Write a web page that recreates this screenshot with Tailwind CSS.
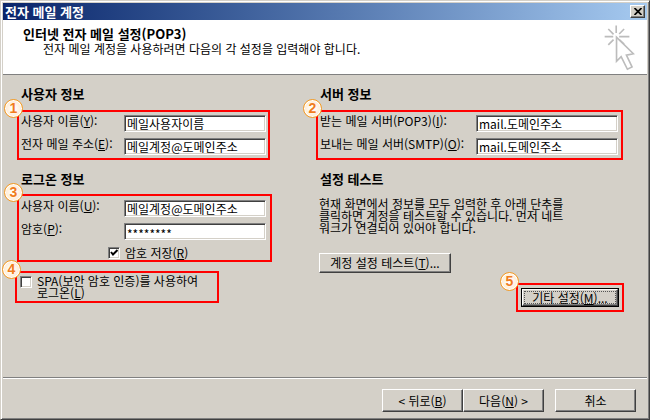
<!DOCTYPE html>
<html lang="ko">
<head>
  <meta charset="UTF-8" />
  <meta name="viewport" content="width=device-width, initial-scale=1.0" />
  <title>전자 메일 계정</title>
  <script src="https://cdn.jsdelivr.net/npm/@tailwindcss/browser@4"></script>
  <style>
    body { font-family: 'Noto Sans CJK KR', 'Liberation Sans', sans-serif; }
    .window { border: 1px solid; border-color: #d4d0c8 #404040 #404040 #d4d0c8; box-shadow: inset 1px 1px #fff, inset -1px -1px #808080; }
    .btn { border: 1px solid; border-color: #fff #404040 #404040 #fff; box-shadow: inset -1px -1px #808080; background: #d4d0c8; }
    .field { border: 1px solid; border-color: #808080 #fff #fff #808080; box-shadow: inset 1px 1px #404040, inset -1px -1px #d4d0c8; background: #fff; }
    .badge { border: 1px solid #f59a22; background: radial-gradient(#fff 10%, #ffe3c0 90%); box-shadow: inset 0 0 0 1px #fff; font-family: 'Liberation Sans', sans-serif; }
  </style>
</head>
<body class="text-xs text-black">
  <div class="window min-h-screen flex flex-col bg-[#d4d0c8] p-[2px]">

    <!-- Title bar -->
    <div class="flex items-center justify-between h-[17px] px-[2px] bg-gradient-to-r from-[#0a246a] to-[#a6caf0]">
      <h1 class="text-[13px] leading-4 font-bold text-white">전자 메일 계정</h1>
      <button type="button" aria-label="닫기" class="btn w-[15px] h-[13px] flex items-center justify-center">
        <svg class="w-2 h-[7px]" viewBox="0 0 8 7" fill="none" stroke="#000" stroke-width="1.7"><path d="M0.5 0L7.5 7M7.5 0L0.5 7" /></svg>
      </button>
    </div>

    <!-- Header -->
    <header class="flex justify-between h-[55px] bg-white border-b border-[#808080] pl-5 pr-3">
      <div class="pt-[6px]">
        <h2 class="text-[13px] leading-4 font-bold">인터넷 전자 메일 설정(POP3)</h2>
        <p class="pl-5 leading-[14px]">전자 메일 계정을 사용하려면 다음의 각 설정을 입력해야 합니다.</p>
      </div>
      <svg class="w-[31px] h-[47px] mt-1" viewBox="40 72 94 140" fill="none" stroke="#bcbcbc" stroke-width="5">
        <path d="M77 75V98M42 109H68M86 109H117M53 86L69 102M101 86L86 101M53 134L69 118M86 118L101 132" />
        <path d="M78 111V184L92 170L111 208L125 201L108 165L129 161Z" />
      </svg>
    </header>

    <main class="grow grid grid-cols-[301px_1fr] pt-[11px] pl-3">
      <div>
        <section>
          <h3 class="pl-[6px] text-[13px] leading-4 font-bold">사용자 정보</h3>
          <div class="relative mt-2 ml-[2px] w-[253px] border-2 border-[#f00] px-[2px] py-[3px] flex flex-col gap-[6px]">
            <span class="badge absolute -top-[13px] -left-[15px] size-[19px] rounded-full text-center text-[14px] leading-[17px] font-bold text-[#f07c1c]">1</span>
            <div class="flex justify-between items-start">
              <label for="name" class="leading-3">사용자 이름(<u>Y</u>):</label>
              <input id="name" type="text" value="메일사용자이름" class="field w-[142px] h-[17px] px-[2px]" />
            </div>
            <div class="flex justify-between items-start">
              <label for="email" class="leading-3">전자 메일 주소(<u>E</u>):</label>
              <input id="email" type="text" value="메일계정@도메인주소" class="field w-[142px] h-[17px] px-[2px]" />
            </div>
          </div>
        </section>

        <section class="mt-[11px]">
          <h3 class="pl-[6px] text-[13px] leading-4 font-bold">로그온 정보</h3>
          <div class="relative mt-[7px] ml-[2px] w-[255px] border-2 border-[#f00] pl-[2px] pr-1 pt-1 flex flex-col gap-[6px]">
            <span class="badge absolute -top-[13px] -left-[15px] size-[19px] rounded-full text-center text-[14px] leading-[17px] font-bold text-[#f07c1c]">3</span>
            <div class="flex justify-between items-start">
              <label for="user" class="leading-3">사용자 이름(<u>U</u>):</label>
              <input id="user" type="text" value="메일계정@도메인주소" class="field w-[142px] h-[17px] px-[2px]" />
            </div>
            <div class="flex justify-between items-start">
              <label for="pass" class="leading-3">암호(<u>P</u>):</label>
              <input id="pass" type="text" value="********" class="field w-[142px] h-[17px] px-[2px] pt-1" />
            </div>
            <label class="flex items-center gap-[5px] pl-[87px] leading-[14px]">
              <span class="grid">
                <input type="checkbox" checked class="field appearance-none size-3 col-start-1 row-start-1" />
                <svg class="size-3 col-start-1 row-start-1 pointer-events-none" viewBox="0 0 12 12" fill="none" stroke="#000" stroke-width="2"><path d="M3 5L5 7.500L9.500 3" /></svg>
              </span>
              <span>암호 저장(<u>R</u>)</span>
            </label>
          </div>
        </section>

        <div class="relative mt-[9px] w-[204px] border-2 border-[#f00] px-[3px] py-[2px]">
          <span class="badge absolute -top-[13px] -left-[15px] size-[19px] rounded-full text-center text-[14px] leading-[17px] font-bold text-[#f07c1c]">4</span>
          <label class="flex items-start gap-[5px] leading-3">
            <input type="checkbox" class="field appearance-none size-3 mt-px shrink-0" />
            <span>SPA(보안 암호 인증)를 사용하여<br />로그온(<u>L</u>)</span>
          </label>
        </div>
      </div>

      <div>
        <section>
          <h3 class="pl-1 text-[13px] leading-4 font-bold">서버 정보</h3>
          <div class="relative mt-2 w-[307px] border-2 border-[#f00] pl-[2px] pr-[3px] py-[3px] flex flex-col gap-[6px]">
            <span class="badge absolute -top-[13px] -left-[15px] size-[19px] rounded-full text-center text-[14px] leading-[17px] font-bold text-[#f07c1c]">2</span>
            <div class="flex justify-between items-start">
              <label for="pop" class="leading-3">받는 메일 서버(POP3)(<u>I</u>):</label>
              <input id="pop" type="text" value="mail.도메인주소" class="field w-[142px] h-[17px] px-[2px]" />
            </div>
            <div class="flex justify-between items-start">
              <label for="smtp" class="leading-3">보내는 메일 서버(SMTP)(<u>O</u>):</label>
              <input id="smtp" type="text" value="mail.도메인주소" class="field w-[142px] h-[17px] px-[2px]" />
            </div>
          </div>
        </section>

        <section class="mt-[11px] pl-[3px]">
          <h3 class="pl-px text-[13px] leading-4 font-bold">설정 테스트</h3>
          <p class="mt-[11px] leading-3">현재 화면에서 정보를 모두 입력한 후 아래 단추를<br />클릭하면 계정을 테스트할 수 있습니다. 먼저 네트<br />워크가 연결되어 있어야 합니다.</p>
          <button type="button" class="btn mt-[19px] w-[132px] h-5 leading-4 block">계정 설정 테스트(<u>T</u>)...</button>
        </section>

        <!-- Button with default focus frame -->
        <div class="relative mt-[10px] ml-[200px] w-[108px] border-2 border-[#f00] p-[3px]">
          <span class="badge absolute -top-[13px] -left-[18px] size-[19px] rounded-full text-center text-[14px] leading-[17px] font-bold text-[#f07c1c]">5</span>
          <div class="border border-black">
            <button type="button" class="btn block w-full h-[17px] p-px"><span class="block border border-dotted border-[#555] leading-[11px]">기타 설정(<u>M</u>)...</span></button>
          </div>
        </div>
      </div>
    </main>

    <footer class="border-t border-[#808080]">
      <div class="flex justify-end border-t border-white pt-[10px] pb-[5px] pr-[11px]">
        <button type="button" class="btn w-[81px] h-[23px]">&lt; 뒤로(<u>B</u>)</button>
        <button type="button" class="btn w-[81px] h-[23px]">다음(<u>N</u>) &gt;</button>
        <button type="button" class="btn w-[81px] h-[23px] ml-[11px]">취소</button>
      </div>
    </footer>
  </div>
</body>
</html>
